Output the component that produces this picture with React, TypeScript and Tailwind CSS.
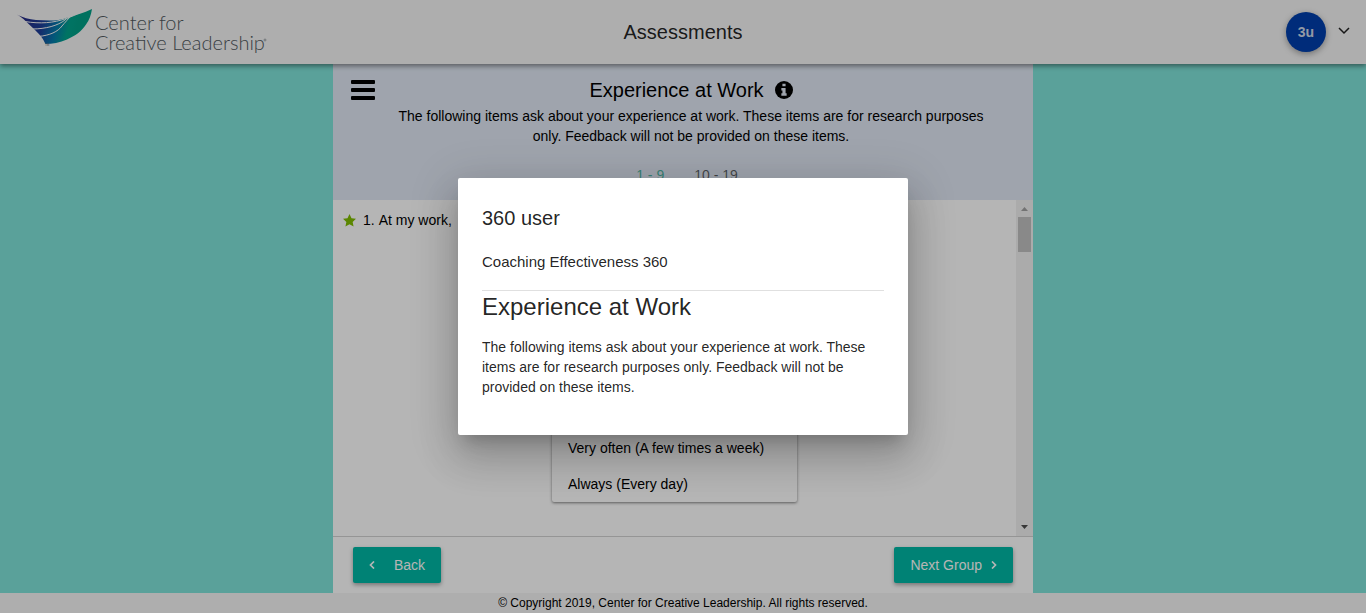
import React from "react";

const answers = ["Very often (A few times a week)", "Always (Every day)"];

function Logo() {
  return (
    <svg width="256" height="50" viewBox="0 0 256 50" role="img" aria-label="Center for Creative Leadership" className="block shrink-0">
      <defs>
        <linearGradient id="wing" gradientUnits="userSpaceOnUse" x1="8" y1="10" x2="62" y2="24">
          <stop offset="0" stopColor="#262b86" />
          <stop offset="0.35" stopColor="#1d3f98" />
          <stop offset="0.6" stopColor="#0579ac" />
          <stop offset="0.82" stopColor="#00a38c" />
          <stop offset="1" stopColor="#009f86" />
        </linearGradient>
      </defs>
      <path
        fill="url(#wing)"
        d="M0.500 7.500 C7 10.500 13 12.500 20 13 C30 13.500 42 14.500 50 11 C59 8.500 68 6 76 2 C75 8 73.500 13 70 17.500 C66 24 59 29 51 32.500 C44 35.500 36 37 29.500 37 C28 34 27 32 25 29.500 C23 27 21.500 25.500 19 23 C16 20 13 17.500 10 14.500 C7 11.500 4 9 0.500 7.500Z"
      />
      <g fill="none" stroke="#f5f5f5" strokeWidth="1">
        <path d="M9 14.500 C24 17 38 16 50 11.500 C56 9.500 61 7.500 65 4.500" />
        <path d="M16 22 C30 22 42 18.500 49 13 L55 8" />
        <path d="M22 29.500 C34 28.500 42 24.500 46 19 C49 15.500 52 12 56 8" />
      </g>
      <text x="29" y="39" fontSize="3" fill="#5f6b73" fontFamily="Liberation Sans, sans-serif">TM</text>
      <g fill="#51595e" fontFamily="Lato, sans-serif" fontWeight="300" fontSize="20">
        <text x="79" y="23">Center for</text>
        <text x="79" y="43">Creative Leadership</text>
      </g>
      <circle cx="249" cy="33" r="1" fill="none" stroke="#717a80" strokeWidth="0.600" />
    </svg>
  );
}

function Chevron({ flip = false }: { flip?: boolean }) {
  return (
    <svg width="6" height="8" viewBox="0 0 6 8" aria-hidden="true" fill="none" stroke="currentColor" strokeWidth="1.700">
      <path d={flip ? "M5 0.500 L1.500 4 L5 7.500" : "M1 0.500 L4.500 4 L1 7.500"} />
    </svg>
  );
}

export default function App() {
  return (
    <div className="relative flex h-screen flex-col overflow-hidden bg-[#7fe3d9] font-['Liberation_Sans',Arial,sans-serif] text-sm leading-5 text-black">
      <header className="relative z-10 grid h-16 shrink-0 grid-cols-[1fr_auto_1fr] items-center bg-[#f5f5f5] px-4 shadow-[0_2px_5px_rgba(0,0,0,0.45)]">
        <Logo />
        <h1 className="text-xl text-black/87">Assessments</h1>
        <button type="button" aria-label="Account menu" className="flex items-center gap-3 justify-self-end">
          <span className="flex size-10 items-center justify-center rounded-full bg-[#003fac] text-sm font-bold text-[#f5f5f5]/85 shadow-[0_2px_6px_rgba(0,0,0,0.35)]">
            3u
          </span>
          <svg width="12" height="10" viewBox="0 0 12 10" aria-hidden="true" fill="none" stroke="#222" strokeWidth="1.500">
            <path d="M1 1 L6 6 L11 1" />
          </svg>
        </button>
      </header>

      <main className="mx-auto flex min-h-0 w-full max-w-[700px] flex-1 flex-col bg-white">
        <section className="flex h-34 shrink-0 items-start bg-[#e0e8f4] pt-4 pr-7 pl-4">
          <button type="button" aria-label="Menu" className="w-7 shrink-0 pl-0.5">
            <svg width="24" height="20" viewBox="0 0 24 20" aria-hidden="true">
              <rect width="24" height="4" rx="1" />
              <rect y="8" width="24" height="4" rx="1" />
              <rect y="16" width="24" height="4" rx="1" />
            </svg>
          </button>
          <div className="flex flex-1 flex-col items-center px-4 text-center">
            <h2 className="flex items-center gap-[11px] text-xl leading-5">
              Experience at Work
              <svg width="18" height="18" viewBox="0 0 17 17" aria-hidden="true">
                <circle cx="8.500" cy="8.500" r="8.500" />
                <path fill="#e0e8f4" d="M7 2.500h3v2.500H7z M6 6.500h4v5h1v2.500H6v-2.500h1v-2.500H6z" />
              </svg>
            </h2>
            <p className="mt-1.5">
              The following items ask about your experience at work. These items are for research purposes only. Feedback
              will not be provided on these items.
            </p>
            <nav aria-label="Question groups" className="mt-[19px] flex gap-[30px] pr-2 text-black/60">
              <a href="#g1" className="text-[#4fb5a4]">1 - 9</a>
              <a href="#g2">10 - 19</a>
            </nav>
          </div>
        </section>

        <section className="flex min-h-0 flex-1 border-b border-[#d2d2d2]">
          <div className="flex min-w-0 flex-1 flex-col px-2.5 pt-2.5">
            <p className="flex items-center">
              <svg width="13" height="13" viewBox="0 0 24 24" aria-hidden="true" fill="#80bd00" className="mr-[7px]">
                <path d="M12 0l3.700 8 8.300 0.900-6.200 5.700 1.700 8.400-7.500-4.200-7.500 4.200 1.700-8.400L0 8.900l8.300-0.900z" />
              </svg>
              <span id="question" className="flex gap-1">
                <span>1.</span>
                <span>At my work,</span>
              </span>
            </p>
            <ul
              aria-labelledby="question"
              className="mt-auto mb-[34px] flex h-63 w-[245px] flex-col justify-end self-center rounded-xs shadow-[0_1px_3px_rgba(0,0,0,0.5)]"
            >
              {answers.map((answer) => (
                <li key={answer} className="flex h-9 items-center px-4">{answer}</li>
              ))}
            </ul>
          </div>
          <div aria-hidden="true" className="flex w-[17px] flex-col items-center bg-[#f1f1f1]">
            <svg width="17" height="17" viewBox="0 0 17 17" fill="#a3a3a3"><path d="M5 11h7l-3.500-4z" /></svg>
            <div className="h-[35px] w-[13px] bg-[#c1c1c1]" />
            <svg width="17" height="17" viewBox="0 0 17 17" fill="#505050" className="mt-auto"><path d="M5 6h7l-3.500 4z" /></svg>
          </div>
        </section>

        <div className="flex h-14 shrink-0 items-center justify-between px-5">
          <button type="button" className="flex h-9 items-center gap-[19px] rounded-xs bg-[#00b8a5] px-4 text-white shadow-[0_2px_4px_rgba(0,0,0,0.35)]">
            <Chevron flip />
            Back
          </button>
          <button type="button" className="flex h-9 items-center gap-[9px] rounded-xs bg-[#00b8a5] px-4 text-white shadow-[0_2px_4px_rgba(0,0,0,0.35)]">
            Next Group
            <Chevron />
          </button>
        </div>
      </main>

      <footer className="h-5 shrink-0 bg-[#f5f5f5] text-center text-xs leading-5">
        © Copyright 2019, Center for Creative Leadership. All rights reserved.
      </footer>

      <div className="absolute inset-0 z-20 flex items-center justify-center bg-black/29">
        <div
          role="dialog"
          aria-modal="true"
          aria-labelledby="dialog-title"
          className="w-[450px] rounded-xs bg-white px-6 pt-6 pb-[38px] text-black/87 shadow-[0_11px_15px_-7px_rgba(0,0,0,0.2),0_24px_38px_3px_rgba(0,0,0,0.14),0_9px_46px_8px_rgba(0,0,0,0.12)]"
        >
          <h2 id="dialog-title" className="text-xl leading-8">360 user</h2>
          <p className="mt-4 text-[15px] leading-6">Coaching Effectiveness 360</p>
          <hr className="mt-4 border-black/12" />
          <h3 className="text-2xl leading-8">Experience at Work</h3>
          <p className="mt-3.5">
            The following items ask about your experience at work. These items are for research purposes only. Feedback
            will not be provided on these items.
          </p>
        </div>
      </div>
    </div>
  );
}
